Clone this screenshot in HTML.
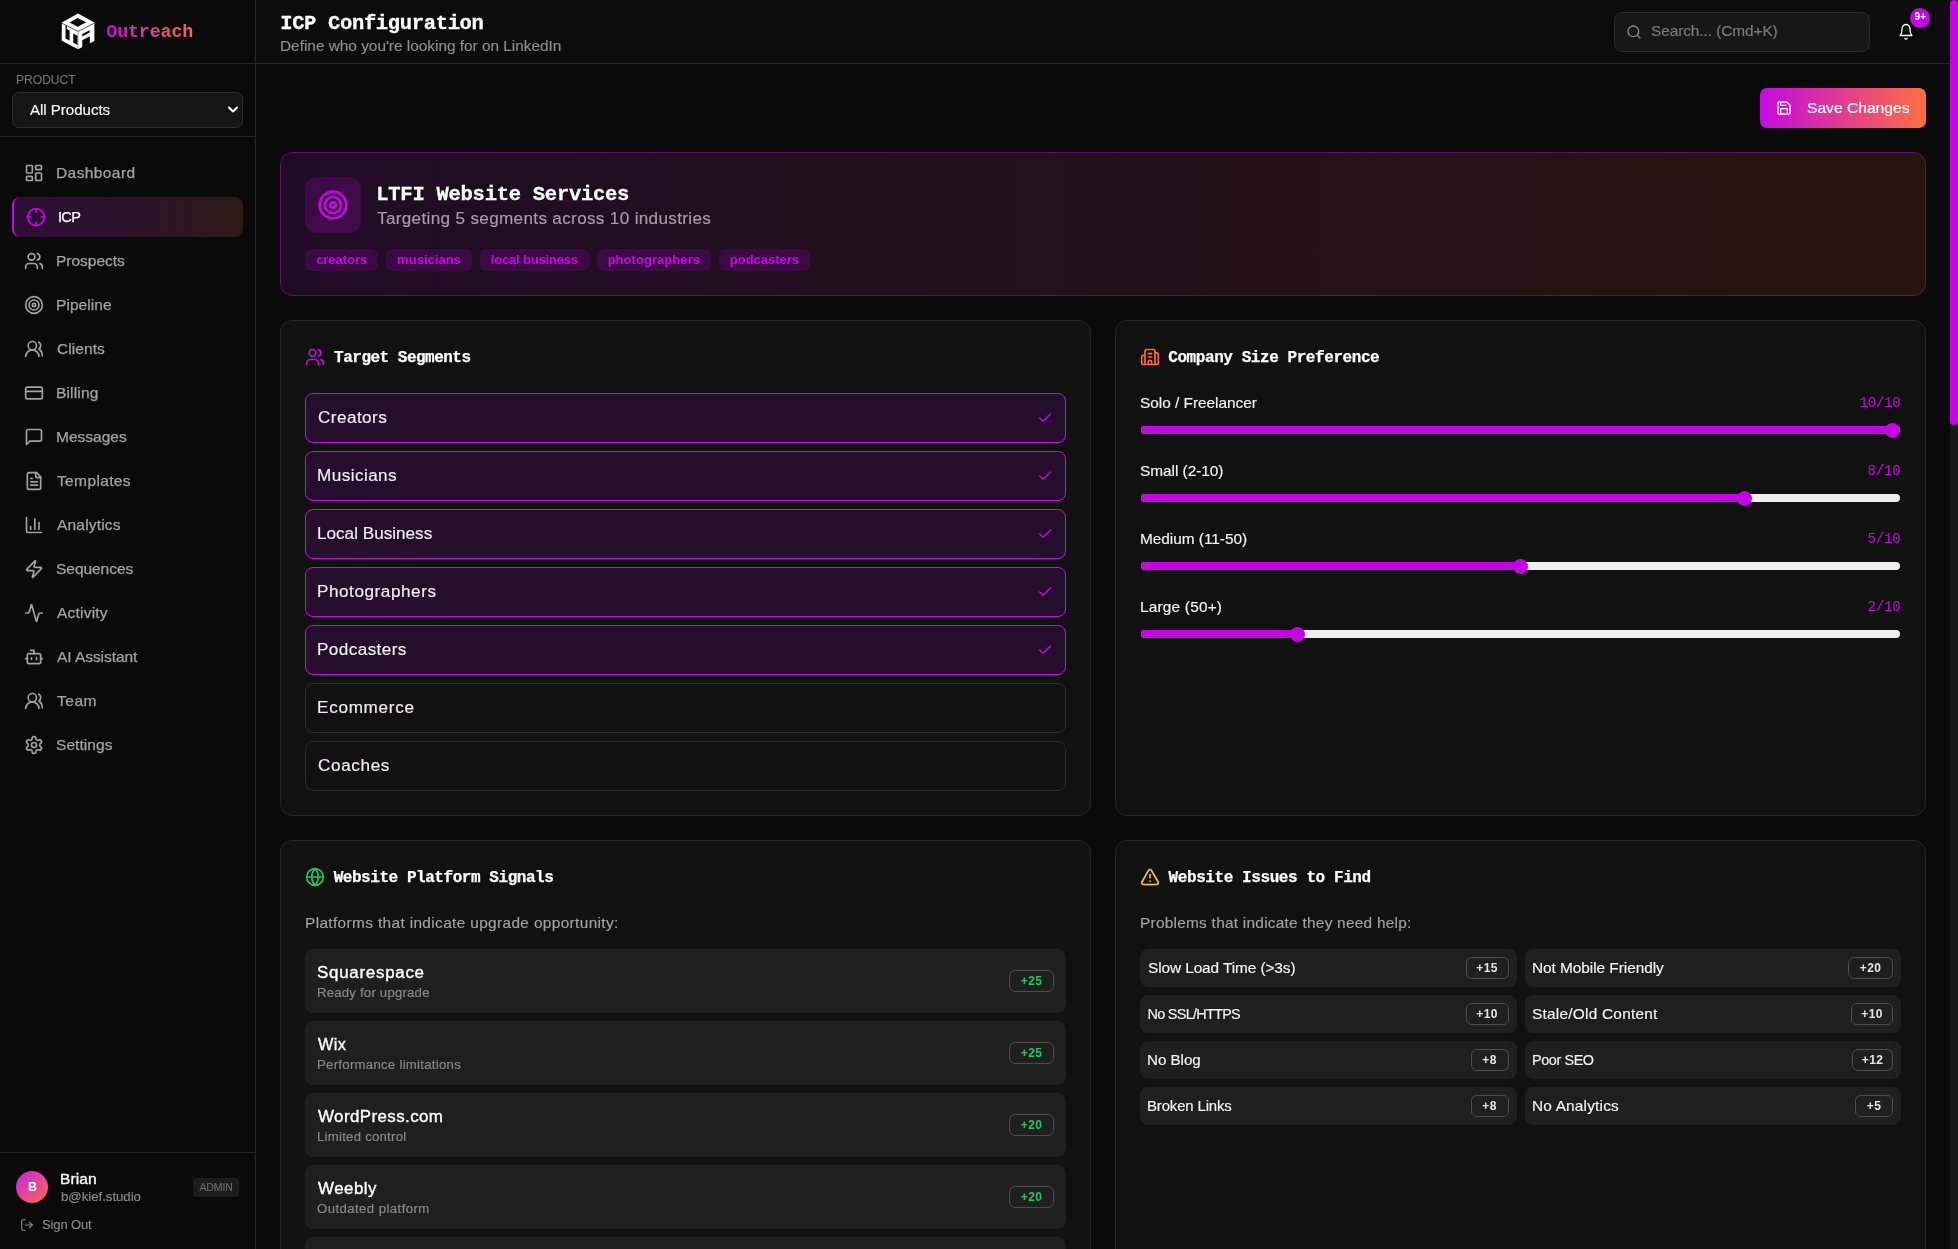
<!DOCTYPE html>
<html lang="en">
<head>
<meta charset="utf-8">
<title>ICP Configuration</title>
<style>
*{box-sizing:border-box;margin:0;padding:0}
html,body{width:1958px;height:1249px;overflow:hidden;background:#0a0a0a;color:#fafafa;font-family:"Liberation Sans",sans-serif;}
svg.ic{fill:none;stroke:currentColor;stroke-width:2;stroke-linecap:round;stroke-linejoin:round;display:block}
#root{position:absolute;left:0;top:0;width:1958px;height:1249px;overflow:hidden;will-change:transform}
.a{position:absolute}
.t{position:absolute;white-space:nowrap;line-height:1;z-index:5}
.m{font-family:"Liberation Mono",monospace}
.ln{position:absolute;background:#262626}
.nvi{position:absolute;left:24px;width:20px;height:20px;color:#a3a3a3}
.card{position:absolute;background:#111;border:1px solid #262626;border-radius:12px}
.hi{position:absolute;width:20px;height:20px}
.seg{position:absolute;left:305px;width:761px;height:50px;border:1px solid #2b2b2b;border-radius:8px}
.seg.on{border-color:#c010de;background:#250e2b}
.seg svg{position:absolute;right:12px;top:16px;width:16px;height:16px;color:#c507e0}
.tr{position:absolute;left:1140.7px;width:759.5px;height:8px;border-radius:4px;background:#efefef}
.fi{position:absolute;left:1140.7px;height:8px;border-radius:4px 0 0 4px;background:#c305e1}
.th{position:absolute;width:15px;height:15px;border-radius:7.5px;background:#c305e1}
.pl{position:absolute;left:305px;width:761px;height:64px;border-radius:8px;background:#1f1f1f}
.bd{position:absolute;height:22px;border:1px solid #4d4d4d;border-radius:6px;font-size:12px;font-weight:700;line-height:20px;text-align:center;white-space:nowrap;letter-spacing:.35px}
.bd.g{color:#22c55e}
.bd.w{color:#e5e5e5}
.is{position:absolute;width:376.5px;height:38px;border-radius:8px;background:#1f1f1f}
.tag{position:absolute;top:249px;height:22px;border-radius:6px;background:#3b0a45}
</style>
</head>
<body>
<div id="root">
<div class="ln" style="left:255px;top:0;width:1px;height:1249px"></div>
<div class="ln" style="left:0;top:63px;width:255px;height:1px"></div>
<div class="ln" style="left:0;top:136px;width:255px;height:1px"></div>
<div class="ln" style="left:0;top:1152px;width:255px;height:1px"></div>
<svg class="a" style="left:50px;top:5px" width="60" height="50" viewBox="0 0 1499 1249">
<polygon fill="#fff" points="700,212 1108,438 1108,902 700,1104 292,892 297,438"/>
<polygon fill="#0a0a0a" points="690,325 905,432 690,545 490,435"/>
<polygon fill="#0a0a0a" points="388,505 420,520 420,600 490,637 490,888 388,834"/>
<polygon fill="#0a0a0a" points="580,712 690,768 690,1002 580,944"/>
<polygon fill="#0a0a0a" points="805,722 990,628 990,690 805,785"/>
<polygon fill="#0a0a0a" points="805,880 995,780 995,965 805,1060"/>
<path d="M300,455 L700,660 L1105,455" fill="none" stroke="#0a0a0a" stroke-width="17"/>
<path d="M700,660 L700,1100" fill="none" stroke="#7a7a7a" stroke-width="16"/>
</svg>
<div class="a" style="left:12px;top:92px;width:231px;height:36px;border:1px solid #2e2e2e;border-radius:7px;background:#151515"></div>
<svg class="a" style="left:227px;top:106px" width="12" height="8" viewBox="0 0 12 8"><path d="M2 1.5 L6 5.5 L10 1.5" fill="none" stroke="#fff" stroke-width="2" stroke-linecap="round" stroke-linejoin="round"/></svg>
<div class="a" style="left:12px;top:197px;width:231px;height:40px;border-radius:8px;border-left:2px solid #c507e0;background:linear-gradient(90deg,#2d0e36 0%,#2c1329 55%,#2b1a14 100%)"></div>
<svg class="ic nvi" style="top:163px" viewBox="0 0 24 24"><rect width="7" height="9" x="3" y="3" rx="1"/><rect width="7" height="5" x="14" y="3" rx="1"/><rect width="7" height="9" x="14" y="12" rx="1"/><rect width="7" height="5" x="3" y="16" rx="1"/></svg>
<svg class="ic a" style="left:26px;top:207px;width:20px;height:20px;color:#c507e0" viewBox="0 0 24 24"><circle cx="12" cy="12" r="10"/><line x1="22" x2="18" y1="12" y2="12"/><line x1="6" x2="2" y1="12" y2="12"/><line x1="12" x2="12" y1="6" y2="2"/><line x1="12" x2="12" y1="22" y2="18"/></svg>
<svg class="ic nvi" style="top:251px" viewBox="0 0 24 24"><path d="M16 21v-2a4 4 0 0 0-4-4H6a4 4 0 0 0-4 4v2"/><circle cx="9" cy="7" r="4"/><path d="M22 21v-2a4 4 0 0 0-3-3.87"/><path d="M16 3.13a4 4 0 0 1 0 7.75"/></svg>
<svg class="ic nvi" style="top:295px" viewBox="0 0 24 24"><circle cx="12" cy="12" r="10"/><circle cx="12" cy="12" r="6"/><circle cx="12" cy="12" r="2"/></svg>
<svg class="ic nvi" style="top:339px" viewBox="0 0 24 24"><path d="M18 21a8 8 0 0 0-16 0"/><circle cx="10" cy="8" r="5"/><path d="M22 20c0-3.37-2-6.5-4-8a5 5 0 0 0-.45-8.3"/></svg>
<svg class="ic nvi" style="top:383px" viewBox="0 0 24 24"><rect width="20" height="14" x="2" y="5" rx="2"/><line x1="2" x2="22" y1="10" y2="10"/></svg>
<svg class="ic nvi" style="top:427px" viewBox="0 0 24 24"><path d="M21 15a2 2 0 0 1-2 2H7l-4 4V5a2 2 0 0 1 2-2h14a2 2 0 0 1 2 2z"/></svg>
<svg class="ic nvi" style="top:471px" viewBox="0 0 24 24"><path d="M15 2H6a2 2 0 0 0-2 2v16a2 2 0 0 0 2 2h12a2 2 0 0 0 2-2V7Z"/><path d="M14 2v4a2 2 0 0 0 2 2h4"/><path d="M10 9H8"/><path d="M16 13H8"/><path d="M16 17H8"/></svg>
<svg class="ic nvi" style="top:515px" viewBox="0 0 24 24"><path d="M3 3v16a2 2 0 0 0 2 2h16"/><path d="M18 17V9"/><path d="M13 17V5"/><path d="M8 17v-3"/></svg>
<svg class="ic nvi" style="top:559px" viewBox="0 0 24 24"><path d="M4 14a1 1 0 0 1-.78-1.63l9.9-10.2a.5.5 0 0 1 .86.46l-1.92 6.02A1 1 0 0 0 13 10h7a1 1 0 0 1 .78 1.63l-9.9 10.2a.5.5 0 0 1-.86-.46l1.92-6.02A1 1 0 0 0 11 14z"/></svg>
<svg class="ic nvi" style="top:603px" viewBox="0 0 24 24"><path d="M22 12h-2.48a2 2 0 0 0-1.93 1.46l-2.35 8.36a.25.25 0 0 1-.48 0L9.24 2.18a.25.25 0 0 0-.48 0l-2.35 8.36A2 2 0 0 1 4.49 12H2"/></svg>
<svg class="ic nvi" style="top:647px" viewBox="0 0 24 24"><path d="M12 8V4H8"/><rect width="16" height="12" x="4" y="8" rx="2"/><path d="M2 14h2"/><path d="M20 14h2"/><path d="M15 13v2"/><path d="M9 13v2"/></svg>
<svg class="ic nvi" style="top:691px" viewBox="0 0 24 24"><path d="M18 21a8 8 0 0 0-16 0"/><circle cx="10" cy="8" r="5"/><path d="M22 20c0-3.37-2-6.5-4-8a5 5 0 0 0-.45-8.3"/></svg>
<svg class="ic nvi" style="top:735px" viewBox="0 0 24 24"><path d="M12.22 2h-.44a2 2 0 0 0-2 2v.18a2 2 0 0 1-1 1.73l-.43.25a2 2 0 0 1-2 0l-.15-.08a2 2 0 0 0-2.73.73l-.22.38a2 2 0 0 0 .73 2.73l.15.1a2 2 0 0 1 1 1.72v.51a2 2 0 0 1-1 1.74l-.15.09a2 2 0 0 0-.73 2.73l.22.38a2 2 0 0 0 2.73.73l.15-.08a2 2 0 0 1 2 0l.43.25a2 2 0 0 1 1 1.73V20a2 2 0 0 0 2 2h.44a2 2 0 0 0 2-2v-.18a2 2 0 0 1 1-1.73l.43-.25a2 2 0 0 1 2 0l.15.08a2 2 0 0 0 2.73-.73l.22-.39a2 2 0 0 0-.73-2.73l-.15-.08a2 2 0 0 1-1-1.74v-.5a2 2 0 0 1 1-1.74l.15-.09a2 2 0 0 0 .73-2.73l-.22-.38a2 2 0 0 0-2.73-.73l-.15.08a2 2 0 0 1-2 0l-.43-.25a2 2 0 0 1-1-1.73V4a2 2 0 0 0-2-2z"/><circle cx="12" cy="12" r="3"/></svg>
<div class="a" style="left:16px;top:1171px;width:32px;height:32px;border-radius:16px;background:linear-gradient(135deg,#c520e4,#ff6b4a)"></div>
<div class="a" style="left:193px;top:1178px;width:46px;height:19px;border-radius:4px;background:#1c1c1c"></div>
<svg class="ic a" style="left:20px;top:1218px;width:14px;height:14px;color:#8a8a8a" viewBox="0 0 24 24"><path d="M9 21H5a2 2 0 0 1-2-2V5a2 2 0 0 1 2-2h4"/><polyline points="16 17 21 12 16 7"/><line x1="21" x2="9" y1="12" y2="12"/></svg>
<div class="a" style="left:256px;top:0;width:1694px;height:63px;background:#0c0c0c"></div>
<div class="ln" style="left:256px;top:63px;width:1694px;height:1px"></div>
<div class="a" style="left:1614px;top:12px;width:256px;height:40px;border:1px solid #2b2b2b;border-radius:8px;background:#171717"></div>
<svg class="ic a" style="left:1626px;top:24px;width:16px;height:16px;color:#8a8a8a" viewBox="0 0 24 24"><circle cx="11" cy="11" r="8"/><path d="m21 21-4.3-4.3"/></svg>
<svg class="ic a" preserveAspectRatio="none" style="left:1898px;top:23.2px;width:16px;height:17.6px;color:#fff;stroke-width:1.9" viewBox="0 0 24 24"><path d="M6 8a6 6 0 0 1 12 0c0 7 3 9 3 9H3s3-2 3-9"/><path d="M10.3 21a1.94 1.94 0 0 0 3.4 0"/></svg>
<div class="a" style="left:1910px;top:8px;width:20px;height:20px;border-radius:10px;background:#c305e1"></div>
<div class="a" style="left:1950px;top:0;width:8px;height:1249px;background:#171717"></div>
<div class="a" style="left:1950px;top:0;width:8px;height:425px;border-radius:4px;background:#c305e1"></div>
<div class="a" style="left:1760px;top:88px;width:166px;height:40px;border-radius:7px;background:linear-gradient(90deg,#c30be2,#ff6f3c)"></div>
<svg class="ic a" style="left:1776px;top:100px;width:16px;height:16px;color:#fff" viewBox="0 0 24 24"><path d="M19 21H5a2 2 0 0 1-2-2V5a2 2 0 0 1 2-2h11l5 5v11a2 2 0 0 1-2 2z"/><polyline points="17 21 17 13 7 13 7 21"/><polyline points="7 3 7 8 15 8"/></svg>
<div class="a" style="left:280px;top:152px;width:1646px;height:144px;border:1px solid #5c0f68;border-radius:12px;background:linear-gradient(90deg,#1f0b24 0%,#22101c 40%,#241214 75%,#27140d 100%)"></div>
<div class="a" style="left:305px;top:177px;width:56px;height:56px;border-radius:12px;background:#400a4a"></div>
<svg class="ic a" style="left:317px;top:189px;width:32px;height:32px;color:#c507e0" viewBox="0 0 24 24"><circle cx="12" cy="12" r="10"/><circle cx="12" cy="12" r="6"/><circle cx="12" cy="12" r="2"/></svg>
<div class="tag" style="left:305px;width:73px"></div>
<div class="tag" style="left:386px;width:86px"></div>
<div class="tag" style="left:480px;width:109px"></div>
<div class="tag" style="left:597px;width:114px"></div>
<div class="tag" style="left:719px;width:91px"></div>
<div class="card" style="left:280px;top:320px;width:811px;height:496px"></div>
<div class="card" style="left:1115px;top:320px;width:811px;height:496px"></div>
<div class="card" style="left:280px;top:840px;width:811px;height:500px"></div>
<div class="card" style="left:1115px;top:840px;width:811px;height:500px"></div>
<svg class="ic hi" style="left:305px;top:347px;color:#c507e0" viewBox="0 0 24 24"><path d="M16 21v-2a4 4 0 0 0-4-4H6a4 4 0 0 0-4 4v2"/><circle cx="9" cy="7" r="4"/><path d="M22 21v-2a4 4 0 0 0-3-3.87"/><path d="M16 3.13a4 4 0 0 1 0 7.75"/></svg>
<svg class="ic hi" style="left:1140px;top:347px;color:#ff6b35" viewBox="0 0 24 24"><path d="M10 12h4"/><path d="M10 8h4"/><path d="M14 21v-3a2 2 0 0 0-4 0v3"/><path d="M6 10H4a2 2 0 0 0-2 2v7a2 2 0 0 0 2 2h16a2 2 0 0 0 2-2V9a2 2 0 0 0-2-2h-2"/><path d="M6 21V5a2 2 0 0 1 2-2h8a2 2 0 0 1 2 2v16"/></svg>
<svg class="ic hi" style="left:305px;top:867px;color:#22c55e" viewBox="0 0 24 24"><circle cx="12" cy="12" r="10"/><path d="M12 2a14.5 14.5 0 0 0 0 20 14.5 14.5 0 0 0 0-20"/><path d="M2 12h20"/></svg>
<svg class="ic hi" style="left:1140px;top:867px;color:#facc15" viewBox="0 0 24 24"><path d="m21.73 18-8-14a2 2 0 0 0-3.48 0l-8 14A2 2 0 0 0 4 21h16a2 2 0 0 0 1.73-3"/><path d="M12 9v4"/><path d="M12 17h.01"/></svg>
<div class="seg on" style="top:393px"><svg class="ic" viewBox="0 0 24 24"><path d="M20 6 9 17l-5-5"/></svg></div>
<div class="seg on" style="top:451px"><svg class="ic" viewBox="0 0 24 24"><path d="M20 6 9 17l-5-5"/></svg></div>
<div class="seg on" style="top:509px"><svg class="ic" viewBox="0 0 24 24"><path d="M20 6 9 17l-5-5"/></svg></div>
<div class="seg on" style="top:567px"><svg class="ic" viewBox="0 0 24 24"><path d="M20 6 9 17l-5-5"/></svg></div>
<div class="seg on" style="top:625px"><svg class="ic" viewBox="0 0 24 24"><path d="M20 6 9 17l-5-5"/></svg></div>
<div class="seg" style="top:683px"></div>
<div class="seg" style="top:741px"></div>
<div class="tr" style="top:426px"></div><div class="fi" style="top:426px;width:752.0px"></div><div class="th" style="left:1885.4px;top:422.5px"></div>
<div class="tr" style="top:494px"></div><div class="fi" style="top:494px;width:603.2px"></div><div class="th" style="left:1736.6px;top:490.5px"></div>
<div class="tr" style="top:562px"></div><div class="fi" style="top:562px;width:380.0px"></div><div class="th" style="left:1513.4px;top:558.5px"></div>
<div class="tr" style="top:630px"></div><div class="fi" style="top:630px;width:156.8px"></div><div class="th" style="left:1290.2px;top:626.5px"></div>
<div class="pl" style="top:949px"><div class="bd g" style="right:12px;top:21px;width:45px">+25</div></div>
<div class="pl" style="top:1021px"><div class="bd g" style="right:12px;top:21px;width:45px">+25</div></div>
<div class="pl" style="top:1093px"><div class="bd g" style="right:12px;top:21px;width:45px">+20</div></div>
<div class="pl" style="top:1165px"><div class="bd g" style="right:12px;top:21px;width:45px">+20</div></div>
<div class="pl" style="top:1237px"><div class="bd g" style="right:12px;top:21px;width:45px">+20</div></div>
<div class="is" style="left:1140px;top:949px"><div class="bd w" style="right:8px;top:8px;width:43px">+15</div></div>
<div class="is" style="left:1524.5px;top:949px"><div class="bd w" style="right:8px;top:8px;width:45px">+20</div></div>
<div class="is" style="left:1140px;top:995px"><div class="bd w" style="right:8px;top:8px;width:43px">+10</div></div>
<div class="is" style="left:1524.5px;top:995px"><div class="bd w" style="right:8px;top:8px;width:42px">+10</div></div>
<div class="is" style="left:1140px;top:1041px"><div class="bd w" style="right:8px;top:8px;width:38px">+8</div></div>
<div class="is" style="left:1524.5px;top:1041px"><div class="bd w" style="right:8px;top:8px;width:41px">+12</div></div>
<div class="is" style="left:1140px;top:1087px"><div class="bd w" style="right:8px;top:8px;width:38px">+8</div></div>
<div class="is" style="left:1524.5px;top:1087px"><div class="bd w" style="right:8px;top:8px;width:38px">+5</div></div>
<div class="t m" id="brand" style="left:106.30px;top:24px;font-size:18.4px;letter-spacing:-0.184px;font-weight:700;background:linear-gradient(90deg,#c90be2,#ff6a42);-webkit-background-clip:text;background-clip:text;color:transparent">Outreach</div>
<div class="t" id="plabel" style="left:16.00px;top:74px;font-size:12px;letter-spacing:0.051px;color:#737373;-webkit-text-stroke:.15px currentColor">PRODUCT</div>
<div class="t" id="seltxt" style="left:30.41px;top:103px;font-size:14.5px;letter-spacing:-0.028px;transform:scaleX(1.04);transform-origin:0 0;color:#fafafa;-webkit-text-stroke:.15px currentColor">All Products</div>
<div class="t" id="nav0" style="left:56.42px;top:166px;font-size:14.5px;letter-spacing:0.373px;transform:scaleX(1.07);transform-origin:0 0;color:#a3a3a3;-webkit-text-stroke:.25px currentColor">Dashboard</div>
<div class="t" id="nav1" style="left:57.92px;top:210px;font-size:14.5px;letter-spacing:-0.613px;color:#fff;-webkit-text-stroke:.25px currentColor">ICP</div>
<div class="t" id="nav2" style="left:56.42px;top:254px;font-size:14.5px;letter-spacing:-0.016px;transform:scaleX(1.07);transform-origin:0 0;color:#a3a3a3;-webkit-text-stroke:.25px currentColor">Prospects</div>
<div class="t" id="nav3" style="left:56.42px;top:298px;font-size:14.5px;letter-spacing:0.047px;transform:scaleX(1.07);transform-origin:0 0;color:#a3a3a3;-webkit-text-stroke:.25px currentColor">Pipeline</div>
<div class="t" id="nav4" style="left:56.73px;top:342px;font-size:14.5px;letter-spacing:0.064px;transform:scaleX(1.07);transform-origin:0 0;color:#a3a3a3;-webkit-text-stroke:.25px currentColor">Clients</div>
<div class="t" id="nav5" style="left:56.42px;top:386px;font-size:14.5px;letter-spacing:0.145px;transform:scaleX(1.07);transform-origin:0 0;color:#a3a3a3;-webkit-text-stroke:.25px currentColor">Billing</div>
<div class="t" id="nav6" style="left:56.45px;top:430px;font-size:14.5px;letter-spacing:-0.009px;transform:scaleX(1.07);transform-origin:0 0;color:#a3a3a3;-webkit-text-stroke:.25px currentColor">Messages</div>
<div class="t" id="nav7" style="left:57.26px;top:474px;font-size:14.5px;letter-spacing:0.336px;transform:scaleX(1.07);transform-origin:0 0;color:#a3a3a3;-webkit-text-stroke:.25px currentColor">Templates</div>
<div class="t" id="nav8" style="left:57.32px;top:518px;font-size:14.5px;letter-spacing:0.172px;transform:scaleX(1.07);transform-origin:0 0;color:#a3a3a3;-webkit-text-stroke:.25px currentColor">Analytics</div>
<div class="t" id="nav9" style="left:56.09px;top:562px;font-size:14.5px;letter-spacing:-0.045px;transform:scaleX(1.07);transform-origin:0 0;color:#a3a3a3;-webkit-text-stroke:.25px currentColor">Sequences</div>
<div class="t" id="nav10" style="left:57.32px;top:606px;font-size:14.5px;letter-spacing:0.191px;transform:scaleX(1.07);transform-origin:0 0;color:#a3a3a3;-webkit-text-stroke:.25px currentColor">Activity</div>
<div class="t" id="nav11" style="left:57.32px;top:650px;font-size:14.5px;letter-spacing:-0.056px;transform:scaleX(1.07);transform-origin:0 0;color:#a3a3a3;-webkit-text-stroke:.25px currentColor">AI Assistant</div>
<div class="t" id="nav12" style="left:57.26px;top:694px;font-size:14.5px;letter-spacing:0.464px;transform:scaleX(1.07);transform-origin:0 0;color:#a3a3a3;-webkit-text-stroke:.25px currentColor">Team</div>
<div class="t" id="nav13" style="left:56.09px;top:738px;font-size:14.5px;letter-spacing:0.046px;transform:scaleX(1.07);transform-origin:0 0;color:#a3a3a3;-webkit-text-stroke:.25px currentColor">Settings</div>
<div class="t" id="avb" style="left:28.00px;top:1181px;font-size:12.5px;color:#fff;font-weight:700">B</div>
<div class="t" id="uname" style="left:60.04px;top:1172px;font-size:14.5px;letter-spacing:0.115px;transform:scaleX(1.07);transform-origin:0 0;color:#fff;-webkit-text-stroke:.3px #fff">Brian</div>
<div class="t" id="umail" style="left:60.59px;top:1191px;font-size:12.4px;letter-spacing:-0.046px;transform:scaleX(1.07);transform-origin:0 0;color:#8a8a8a;-webkit-text-stroke:.15px currentColor">b@kief.studio</div>
<div class="t" id="admin" style="left:199.46px;top:1182px;font-size:10.5px;letter-spacing:-0.088px;color:#6b6b6b;-webkit-text-stroke:.15px currentColor">ADMIN</div>
<div class="t" id="signout" style="left:42.00px;top:1218px;font-size:13px;letter-spacing:-0.131px;color:#8a8a8a;-webkit-text-stroke:.15px currentColor">Sign Out</div>
<div class="t m" id="title" style="left:280.18px;top:14px;font-size:20.5px;letter-spacing:-0.340px;font-weight:700;color:#fff;-webkit-text-stroke:.3px #fff">ICP Configuration</div>
<div class="t" id="subtitle" style="left:280.15px;top:39px;font-size:14.4px;letter-spacing:-0.013px;transform:scaleX(1.07);transform-origin:0 0;color:#8f8f8f;-webkit-text-stroke:.15px currentColor">Define who you&#x27;re looking for on LinkedIn</div>
<div class="t" id="search" style="left:1651.31px;top:24px;font-size:14.4px;letter-spacing:-0.069px;transform:scaleX(1.07);transform-origin:0 0;color:#7c7c7c;-webkit-text-stroke:.15px currentColor">Search... (Cmd+K)</div>
<div class="t" id="nine" style="left:1914.40px;top:12px;font-size:10px;letter-spacing:0.200px;color:#fff;font-weight:700">9+</div>
<div class="t" id="savetxt" style="left:1807.45px;top:101px;font-size:14.6px;transform:scaleX(1.07);transform-origin:0 0;color:#fff;-webkit-text-stroke:.2px #fff">Save Changes</div>
<div class="t m" id="htitle" style="left:376.25px;top:185px;font-size:20.5px;letter-spacing:-0.260px;font-weight:700;color:#fff;-webkit-text-stroke:.3px #fff">LTFI Website Services</div>
<div class="t" id="hsub" style="left:377.30px;top:211px;font-size:16px;letter-spacing:0.308px;transform:scaleX(1.07);transform-origin:0 0;color:#a69fa8;-webkit-text-stroke:.15px currentColor">Targeting 5 segments across 10 industries</div>
<div class="t" id="tag0" style="left:316.14px;top:253px;font-size:13px;letter-spacing:-0.042px;color:#c507e0;font-weight:700">creators</div>
<div class="t" id="tag1" style="left:397.11px;top:253px;font-size:13px;letter-spacing:0.018px;color:#c507e0;font-weight:700">musicians</div>
<div class="t" id="tag2" style="left:490.71px;top:253px;font-size:13px;letter-spacing:-0.169px;color:#c507e0;font-weight:700">local business</div>
<div class="t" id="tag3" style="left:607.63px;top:253px;font-size:13px;letter-spacing:0.053px;color:#c507e0;font-weight:700">photographers</div>
<div class="t" id="tag4" style="left:729.87px;top:253px;font-size:13px;letter-spacing:-0.026px;color:#c507e0;font-weight:700">podcasters</div>
<div class="t m" id="h1" style="left:334.11px;top:350px;font-size:16px;letter-spacing:-0.505px;font-weight:700;color:#fff;-webkit-text-stroke:.25px #fff">Target Segments</div>
<div class="t m" id="h2" style="left:1168.28px;top:350px;font-size:16px;letter-spacing:-0.428px;font-weight:700;color:#fff;-webkit-text-stroke:.25px #fff">Company Size Preference</div>
<div class="t m" id="h3" style="left:333.64px;top:870px;font-size:16px;letter-spacing:-0.443px;font-weight:700;color:#fff;-webkit-text-stroke:.25px #fff">Website Platform Signals</div>
<div class="t m" id="h4" style="left:1168.60px;top:870px;font-size:16px;letter-spacing:-0.415px;font-weight:700;color:#fff;-webkit-text-stroke:.25px #fff">Website Issues to Find</div>
<div class="t" id="seg0" style="left:317.73px;top:410px;font-size:16px;letter-spacing:0.417px;transform:scaleX(1.07);transform-origin:0 0;color:#f3eef5;-webkit-text-stroke:.15px currentColor">Creators</div>
<div class="t" id="seg1" style="left:317.39px;top:468px;font-size:16px;letter-spacing:0.409px;transform:scaleX(1.07);transform-origin:0 0;color:#f3eef5;-webkit-text-stroke:.15px currentColor">Musicians</div>
<div class="t" id="seg2" style="left:317.39px;top:526px;font-size:16px;letter-spacing:0.005px;transform:scaleX(1.07);transform-origin:0 0;color:#f3eef5;-webkit-text-stroke:.15px currentColor">Local Business</div>
<div class="t" id="seg3" style="left:317.39px;top:584px;font-size:16px;letter-spacing:0.518px;transform:scaleX(1.07);transform-origin:0 0;color:#f3eef5;-webkit-text-stroke:.15px currentColor">Photographers</div>
<div class="t" id="seg4" style="left:317.39px;top:642px;font-size:16px;letter-spacing:0.391px;transform:scaleX(1.07);transform-origin:0 0;color:#f3eef5;-webkit-text-stroke:.15px currentColor">Podcasters</div>
<div class="t" id="seg5" style="left:317.39px;top:700px;font-size:16px;letter-spacing:0.663px;transform:scaleX(1.07);transform-origin:0 0;color:#f3eef5;-webkit-text-stroke:.15px currentColor">Ecommerce</div>
<div class="t" id="seg6" style="left:317.73px;top:758px;font-size:16px;letter-spacing:0.596px;transform:scaleX(1.07);transform-origin:0 0;color:#f3eef5;-webkit-text-stroke:.15px currentColor">Coaches</div>
<div class="t" id="sl0" style="left:1139.96px;top:396px;font-size:14.4px;letter-spacing:-0.017px;transform:scaleX(1.07);transform-origin:0 0;color:#f5f5f5;-webkit-text-stroke:.15px currentColor">Solo / Freelancer</div>
<div class="t m" id="slv0" style="left:1859.48px;top:396px;font-size:14px;letter-spacing:-0.197px;color:#c507e0">10/10</div>
<div class="t" id="sl1" style="left:1139.96px;top:464px;font-size:14.4px;letter-spacing:-0.033px;transform:scaleX(1.07);transform-origin:0 0;color:#f5f5f5;-webkit-text-stroke:.15px currentColor">Small (2-10)</div>
<div class="t m" id="slv1" style="left:1867.60px;top:464px;font-size:14px;letter-spacing:-0.150px;color:#c507e0">8/10</div>
<div class="t" id="sl2" style="left:1140.26px;top:532px;font-size:14.4px;letter-spacing:-0.034px;transform:scaleX(1.07);transform-origin:0 0;color:#f5f5f5;-webkit-text-stroke:.15px currentColor">Medium (11-50)</div>
<div class="t m" id="slv2" style="left:1867.52px;top:532px;font-size:14px;letter-spacing:-0.125px;color:#c507e0">5/10</div>
<div class="t" id="sl3" style="left:1140.26px;top:600px;font-size:14.4px;letter-spacing:0.180px;transform:scaleX(1.07);transform-origin:0 0;color:#f5f5f5;-webkit-text-stroke:.15px currentColor">Large (50+)</div>
<div class="t m" id="slv3" style="left:1867.56px;top:600px;font-size:14px;letter-spacing:-0.137px;color:#c507e0">2/10</div>
<div class="t" id="sub3" style="left:305.15px;top:916px;font-size:14.4px;letter-spacing:0.336px;transform:scaleX(1.07);transform-origin:0 0;color:#a3a3a3;-webkit-text-stroke:.15px currentColor">Platforms that indicate upgrade opportunity:</div>
<div class="t" id="sub4" style="left:1139.65px;top:916px;font-size:14.4px;letter-spacing:0.237px;transform:scaleX(1.07);transform-origin:0 0;color:#a3a3a3;-webkit-text-stroke:.15px currentColor">Problems that indicate they need help:</div>
<div class="t" id="pl0" style="left:316.70px;top:965px;font-size:15.8px;letter-spacing:0.691px;transform:scaleX(1.07);transform-origin:0 0;color:#fff;-webkit-text-stroke:.35px #fff">Squarespace</div>
<div class="t" id="pld0" style="left:317.20px;top:987px;font-size:12.3px;letter-spacing:0.203px;transform:scaleX(1.07);transform-origin:0 0;color:#8a8a8a;-webkit-text-stroke:.15px currentColor">Ready for upgrade</div>
<div class="t" id="pl1" style="left:318.20px;top:1037px;font-size:15.8px;letter-spacing:0.380px;transform:scaleX(1.03);transform-origin:0 0;color:#fff;-webkit-text-stroke:.35px #fff">Wix</div>
<div class="t" id="pld1" style="left:317.20px;top:1059px;font-size:12.3px;letter-spacing:0.268px;transform:scaleX(1.07);transform-origin:0 0;color:#8a8a8a;-webkit-text-stroke:.15px currentColor">Performance limitations</div>
<div class="t" id="pl2" style="left:318.20px;top:1109px;font-size:15.8px;letter-spacing:0.389px;transform:scaleX(1.07);transform-origin:0 0;color:#fff;-webkit-text-stroke:.35px #fff">WordPress.com</div>
<div class="t" id="pld2" style="left:317.20px;top:1131px;font-size:12.3px;letter-spacing:0.240px;transform:scaleX(1.07);transform-origin:0 0;color:#8a8a8a;-webkit-text-stroke:.15px currentColor">Limited control</div>
<div class="t" id="pl3" style="left:318.20px;top:1181px;font-size:15.8px;letter-spacing:0.453px;transform:scaleX(1.07);transform-origin:0 0;color:#fff;-webkit-text-stroke:.35px #fff">Weebly</div>
<div class="t" id="pld3" style="left:317.40px;top:1203px;font-size:12.3px;letter-spacing:0.405px;transform:scaleX(1.07);transform-origin:0 0;color:#8a8a8a;-webkit-text-stroke:.15px currentColor">Outdated platform</div>
<div class="t" id="isl0" style="left:1147.97px;top:961px;font-size:14.4px;letter-spacing:-0.089px;transform:scaleX(1.07);transform-origin:0 0;color:#f5f5f5;-webkit-text-stroke:.15px currentColor">Slow Load Time (&gt;3s)</div>
<div class="t" id="isr0" style="left:1531.75px;top:961px;font-size:14.4px;letter-spacing:-0.046px;transform:scaleX(1.07);transform-origin:0 0;color:#f5f5f5;-webkit-text-stroke:.15px currentColor">Not Mobile Friendly</div>
<div class="t" id="isl1" style="left:1147.53px;top:1007px;font-size:14.4px;letter-spacing:-0.693px;color:#f5f5f5;-webkit-text-stroke:.15px currentColor">No SSL/HTTPS</div>
<div class="t" id="isr1" style="left:1532.47px;top:1007px;font-size:14.4px;letter-spacing:0.221px;transform:scaleX(1.07);transform-origin:0 0;color:#f5f5f5;-webkit-text-stroke:.15px currentColor">Stale/Old Content</div>
<div class="t" id="isl2" style="left:1147.39px;top:1053px;font-size:14.4px;letter-spacing:-0.009px;transform:scaleX(1.05);transform-origin:0 0;color:#f5f5f5;-webkit-text-stroke:.15px currentColor">No Blog</div>
<div class="t" id="isr2" style="left:1531.98px;top:1053px;font-size:14.4px;letter-spacing:-0.386px;color:#f5f5f5;-webkit-text-stroke:.15px currentColor">Poor SEO</div>
<div class="t" id="isl3" style="left:1147.36px;top:1099px;font-size:14.4px;letter-spacing:-0.149px;transform:scaleX(1.04);transform-origin:0 0;color:#f5f5f5;-webkit-text-stroke:.15px currentColor">Broken Links</div>
<div class="t" id="isr3" style="left:1531.75px;top:1099px;font-size:14.4px;letter-spacing:0.169px;transform:scaleX(1.07);transform-origin:0 0;color:#f5f5f5;-webkit-text-stroke:.15px currentColor">No Analytics</div>
</div>
</body>
</html>
